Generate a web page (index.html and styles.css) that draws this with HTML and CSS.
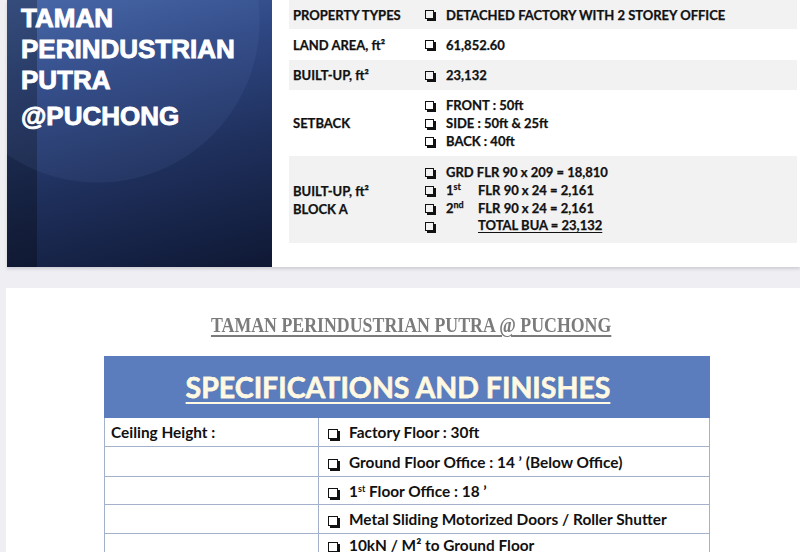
FILE: index.html
```html
<!DOCTYPE html>
<html lang="en">
<head>
<meta charset="utf-8">
<title>Taman Perindustrian Putra @ Puchong</title>
<link rel="stylesheet" href="styles.css">
</head>
<body>
<div class="page">
  <section class="card card-top">
    <div class="panel">
      <h1 class="ptitle">
        <span class="pline">TAMAN</span>
        <span class="pline">PERINDUSTRIAN</span>
        <span class="pline">PUTRA</span>
        <span class="pline at">@PUCHONG</span>
      </h1>
    </div>
    <div class="info">
      <div class="row alt r1">
        <div class="lbl">PROPERTY TYPES</div>
        <ul class="vals"><li><i class="cb"></i>DETACHED FACTORY WITH 2 STOREY OFFICE</li></ul>
      </div>
      <div class="row r2">
        <div class="lbl">LAND AREA, ft²</div>
        <ul class="vals"><li><i class="cb"></i>61,852.60</li></ul>
      </div>
      <div class="row alt r3">
        <div class="lbl">BUILT-UP, ft²</div>
        <ul class="vals"><li><i class="cb"></i>23,132</li></ul>
      </div>
      <div class="row r4">
        <div class="lbl">SETBACK</div>
        <ul class="vals">
          <li><i class="cb"></i>FRONT : 50ft</li>
          <li><i class="cb"></i>SIDE : 50ft &amp; 25ft</li>
          <li><i class="cb"></i>BACK : 40ft</li>
        </ul>
      </div>
      <div class="row alt r5">
        <div class="lbl">BUILT-UP, ft²<br>BLOCK A</div>
        <ul class="vals">
          <li><i class="cb"></i>GRD FLR 90 x 209 = 18,810</li>
          <li><i class="cb"></i><span class="ord">1<sup>st</sup></span>FLR 90 x 24 = 2,161</li>
          <li><i class="cb"></i><span class="ord">2<sup>nd</sup></span>FLR 90 x 24 = 2,161</li>
          <li><i class="cb"></i><span class="ord"></span><u>TOTAL BUA = 23,132</u></li>
        </ul>
      </div>
    </div>
  </section>

  <section class="card card-bottom">
    <div class="wrap">
      <h2 class="stitle"><span>TAMAN PERINDUSTRIAN PUTRA @ PUCHONG</span></h2>
      <table class="spec">
        <colgroup><col class="c1"><col class="c2"></colgroup>
        <thead>
          <tr><th colspan="2"><span>SPECIFICATIONS AND FINISHES</span></th></tr>
        </thead>
        <tbody>
          <tr><td>Ceiling Height :</td><td><i class="cb"></i>Factory Floor : 30ft</td></tr>
          <tr class="h30"><td></td><td><i class="cb"></i>Ground Floor Office : 14 ’ (Below Office)</td></tr>
          <tr class="h28"><td></td><td><i class="cb"></i>1<sup>st</sup> Floor Office : 18 ’</td></tr>
          <tr><td></td><td><i class="cb"></i>Metal Sliding Motorized Doors / Roller Shutter</td></tr>
          <tr class="tall"><td class="mid">Floor Loading Capacity :</td><td class="top"><i class="cb"></i>10kN / M² to Ground Floor</td></tr>
        </tbody>
      </table>
    </div>
  </section>
</div>
</body>
</html>
```

FILE: styles.css
```css
html, body {
  margin: 0;
  padding: 0;
}
body {
  background: #eeeef3;
  width: 800px;
  height: 552px;
  overflow: hidden;
  font-family: "Lato", "Liberation Sans", sans-serif;
  color: #111;
}
.page {
  display: flex;
  flex-direction: column;
  gap: 21px;
}
.card {
  background: #ffffff;
}
.card-top {
  margin-left: 7px;
  height: 267px;
  display: flex;
  box-shadow: 0 2px 3px rgba(60, 60, 80, 0.18);
}
.panel {
  width: 265px;
  flex: none;
  background:
    radial-gradient(circle 162px at 91px 21px, rgba(140, 170, 235, 0.07) 0 99.4%, transparent 100%),
    linear-gradient(to right, rgba(0, 0, 0, 0.3) 0 30px, transparent 30px),
    linear-gradient(165deg, #4363a4 0%, #2f4884 28%, #1f305d 60%, #0f1834 100%);
  padding: 2px 0 0 14px;
  box-sizing: border-box;
}
.ptitle {
  margin: 0;
  font-family: "Liberation Sans", Arial, sans-serif;
  font-weight: 700;
  font-size: 26px;
  line-height: 31px;
  color: #ffffff;
  -webkit-text-stroke: 0.9px #ffffff;
  padding-top: 1px;
}
.pline {
  display: block;
}
.pline.at {
  margin-top: 5px;
}
.info {
  flex: 1;
  padding: 0 3px 0 17px;
  font-weight: 700;
  font-size: 13px;
  -webkit-text-stroke: 0.25px #111;
}
.row {
  display: flex;
  align-items: center;
}
.row.alt {
  background: #f2f2f2;
}
.r1 { height: 29px; }
.r2 { height: 31px; }
.r3 { height: 30px; }
.r4 { height: 66px; }
.r5 { height: 87px; }
.lbl {
  width: 131px;
  flex: none;
  padding-left: 4px;
  box-sizing: border-box;
  line-height: 18px;
}
.vals {
  list-style: none;
  margin: 0;
  padding: 0 0 0 5px;
}
.vals li {
  line-height: 18px;
  display: flex;
  align-items: center;
}
.r5 .vals li {
  line-height: 17.7px;
}
.cb {
  display: inline-block;
  width: 9px;
  height: 9px;
  border: 1.2px solid #111;
  box-sizing: border-box;
  box-shadow: 2px 2px 0 #111;
  margin-right: 12px;
  flex: none;
}
.ord {
  display: inline-block;
  width: 32px;
  flex: none;
}
.ord sup, .spec sup {
  font-size: 9px;
  line-height: 0;
  vertical-align: 5px;
}
.vals u {
  text-decoration-thickness: 1px;
  text-underline-offset: 2px;
}
.card-bottom {
  margin-left: 6px;
  height: 264px;
  overflow: hidden;
  padding-top: 25px;
  box-sizing: border-box;
}
.wrap {
  width: 606px;
  margin-left: 98px;
}
.stitle {
  margin: 0 0 19px 0;
  text-align: center;
  padding-left: 8px;
  font-family: "Liberation Serif", "Times New Roman", serif;
  font-weight: 700;
  font-size: 22px;
  line-height: 24px;
  color: #7b7b7b;
}
.stitle span {
  display: inline-block;
  transform: scaleX(0.81);
  text-decoration: underline;
  text-decoration-thickness: 1.5px;
  text-underline-offset: 3px;
}
.spec {
  width: 606px;
  border-collapse: collapse;
  table-layout: fixed;
  font-weight: 700;
  font-size: 15.4px;
}
.spec col.c1 { width: 214px; }
.spec th {
  height: 60px;
  padding: 0 18px 0 0;
  background: #5b7dbd;
  border: 1px solid #5b7dbd;
  text-align: center;
}
.spec th span {
  font-size: 28.5px;
  font-weight: 700;
  color: #fff9e3;
  -webkit-text-stroke: 0.4px #fff9e3;
  text-decoration: underline;
  text-decoration-thickness: 2px;
  text-underline-offset: 4px;
  text-shadow: 0 0 1px rgba(0, 0, 0, 0.2);
}
.spec td {
  border: 1px solid #a3b1cc;
  height: 29px;
  padding: 0 0 0 6px;
  box-sizing: border-box;
  vertical-align: middle;
  white-space: nowrap;
}
.spec td + td {
  padding-left: 9px;
}
.spec td .cb {
  width: 10px;
  height: 10px;
  margin-right: 11px;
  vertical-align: -1px;
}
.spec tr.h30 td { height: 30px; }
.spec tr.h28 td { height: 28px; }
.spec tr.tall td { height: 48px; }
.spec td.top {
  vertical-align: top;
  padding-top: 2px;
}
.spec td.mid {
  vertical-align: top;
  padding-top: 14px;
}
```
